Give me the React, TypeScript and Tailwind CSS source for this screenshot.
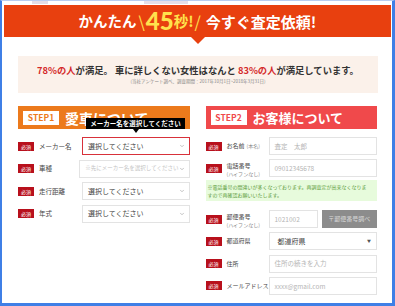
import { ChevronDown } from 'lucide-react';

const FONT = { fontFamily: '"Noto Sans CJK JP", "Noto Sans", sans-serif' };

function Badge() {
  return (
    <span className="flex h-[9px] w-[16px] shrink-0 items-center justify-center bg-[#b8101c] text-[5px] leading-none text-white">
      必須
    </span>
  );
}

function SelectBox({ text, muted, focused }: { text: string; muted?: boolean; focused?: boolean }) {
  return (
    <div
      className={`flex h-[18px] flex-1 items-center justify-between bg-white pl-[5px] pr-[4px] ${
        focused ? 'border-[1.5px] border-[#d8313a]' : 'border border-[#e3e3e3]'
      }`}
    >
      <span className={`whitespace-nowrap leading-none ${muted ? 'text-[5.5px] text-[#c4c4c4]' : 'text-[7px] text-[#444]'}`}>
        {text}
      </span>
      <ChevronDown className="h-[6px] w-[6px] text-[#888]" strokeWidth={2} />
    </div>
  );
}

function CarRow({ label, text, muted, focused }: { label: string; text: string; muted?: boolean; focused?: boolean }) {
  return (
    <div className="flex h-[18px] items-center">
      <Badge />
      <span className="ml-[5px] w-[43px] text-[6.5px] leading-none text-[#444]">{label}</span>
      <SelectBox text={text} muted={muted} focused={focused} />
    </div>
  );
}

function Input({ text, dark, className = '' }: { text: string; dark?: boolean; className?: string }) {
  return (
    <div className={`flex h-[18px] items-center border border-[#e3e3e3] bg-white pl-[5px] ${className}`}>
      <span className={`whitespace-nowrap text-[6.5px] leading-none ${dark ? 'text-[#555]' : 'text-[#b5b5b5]'}`}>{text}</span>
    </div>
  );
}

function UserRow({ label, sub, inline, children }: { label: string; sub?: string; inline?: string; children: React.ReactNode }) {
  return (
    <div className="flex h-[18px] items-center">
      <div className="flex h-[18px] w-[63px] shrink-0 items-center">
        <Badge />
        <div className={`ml-[5px] flex flex-col gap-[2px] ${sub ? 'mt-[3px]' : ''}`}>
          <span className="whitespace-nowrap text-[6px] leading-none text-[#444]">
            {label}
            {inline && <span className="ml-[2px] text-[5px] text-[#888]">{inline}</span>}
          </span>
          {sub && <span className="whitespace-nowrap text-[5px] leading-none text-[#888]">{sub}</span>}
        </div>
      </div>
      <div className="flex h-[18px] flex-1">{children}</div>
    </div>
  );
}

export default function App() {
  return (
    <div
      style={FONT}
      className="relative flex h-[306px] w-[395px] flex-col overflow-hidden border-b-[3px] border-l-[2px] border-r-[3px] border-t border-[#3f7fe6] border-t-[#b9cdf0] bg-white"
    >
      {/* cut-off image above */}
      <div className="flex h-[4px] shrink-0 gap-[96px] pl-[30px]">
        <div className="h-[3px] w-[16px] bg-[#e4dde6]" />
        <div className="h-[3px] w-[44px] bg-[#e6dfe8]" />
      </div>

      {/* banner */}
      <div className="relative ml-[2px] mr-[1px] flex h-[32px] shrink-0 items-center justify-center bg-[#e8400f] text-white">
        <div className="flex items-center font-bold leading-none">
          <span className="text-[14.5px]">かんたん</span>
          <span className="ml-[2px] text-[16px] font-normal text-[#ffe24d]">\</span>
          <span className="ml-[1px] text-[24px] text-[#ffe24d]" style={{ fontFamily: '"Lato", sans-serif', fontWeight: 900 }}>45</span>
          <span className="text-[14.5px] text-[#ffe24d]">秒!</span>
          <span className="ml-[1px] text-[16px] font-normal text-[#ffe24d]">/</span>
          <span className="ml-[5px] text-[15px]">今すぐ査定依頼!</span>
        </div>
        <div className="absolute left-[187px] top-[32px] h-0 w-0 border-l-[7px] border-r-[7px] border-t-[7px] border-l-transparent border-r-transparent border-t-[#e8400f]" />
      </div>

      {/* satisfaction box */}
      <div className="ml-[16px] mr-[14px] mt-[19px] flex h-[37px] shrink-0 flex-col items-center justify-center bg-[#fbf1ea]">
        <p className="whitespace-nowrap text-[9.3px] font-bold leading-none text-[#333]">
          <span className="text-[#d42a2a]">78%の人</span>が満足。 車に詳しくない女性はなんと{' '}
          <span className="text-[#d42a2a]">83%の人</span>が満足しています。
        </p>
        <p className="mt-[4px] whitespace-nowrap text-[4.5px] leading-none text-[#888]">
          (当社アンケート調べ、調査期間：2017年10月1日~2018年3月31日)
        </p>
      </div>

      {/* steps */}
      <div className="ml-[16px] mr-[15px] mt-[13px] grid grid-cols-2 gap-[16px]">
        {/* step 1 */}
        <div className="relative flex flex-col">
          <div className="flex h-[23px] items-center bg-[#ec7a1c] pl-[5px]">
            <span className="flex h-[14px] w-[36px] items-center justify-center bg-white text-[8.5px] font-bold leading-none text-[#ec7a1c]">
              STEP1
            </span>
            <span className="ml-[6px] text-[14px] font-bold leading-none text-white">愛車について</span>
          </div>
          <div className="mt-[8px] flex flex-col gap-[4.5px]">
            <CarRow label="メーカー名" text="選択してください" focused />
            <CarRow label="車種" text="※先にメーカー名を選択してください" muted />
            <CarRow label="走行距離" text="選択してください" />
            <CarRow label="年式" text="選択してください" />
          </div>

          {/* tooltip */}
          <div className="absolute left-[68px] top-[12px] flex h-[11px] w-[99px] items-center justify-center bg-black">
            <span className="whitespace-nowrap text-[6.5px] font-bold leading-none text-white">メーカー名を選択してください</span>
            <div className="absolute left-[47px] top-[11px] h-0 w-0 border-l-[3px] border-r-[3px] border-t-[4px] border-l-transparent border-r-transparent border-t-black" />
          </div>
        </div>

        {/* step 2 */}
        <div className="flex flex-col">
          <div className="flex h-[23px] items-center bg-[#f0494b] pl-[5px]">
            <span className="flex h-[15px] w-[36px] items-center justify-center bg-white text-[8.5px] font-bold leading-none text-[#f0494b]">
              STEP2
            </span>
            <span className="ml-[6px] text-[13px] font-bold leading-none text-white">お客様について</span>
          </div>

          <div className="mt-[8px] flex flex-col gap-[4px]">
            <UserRow label="お名前" inline="(本名)">
              <Input text="査定　太郎" className="flex-1" />
            </UserRow>
            <UserRow label="電話番号" sub="(ハイフンなし)">
              <Input text="09012345678" className="flex-1" />
            </UserRow>
          </div>

          <div className="mt-[3px] flex h-[21px] flex-col justify-center gap-[2.5px] bg-[#e7fbdc] px-[2px]">
            <span className="whitespace-nowrap text-[5px] leading-none text-[#5a9a3a]">
              ※電話番号の間違いが多くなっております。再調査定が出来なくなりま
            </span>
            <span className="whitespace-nowrap text-[5px] leading-none text-[#5a9a3a]">すので再確認お願いいたします。</span>
          </div>

          <div className="mt-[9px] flex flex-col gap-[4.3px]">
            <UserRow label="郵便番号" sub="(ハイフンなし)">
              <Input text="1021002" className="w-[49px]" />
              <div className="ml-[4px] flex h-[18px] flex-1 items-center justify-center bg-[#8c8c8c]">
                <span className="whitespace-nowrap text-[6px] leading-none text-[#d8d8d8]">〒郵便番号調べ</span>
              </div>
            </UserRow>
            <UserRow label="都道府県">
              <div className="flex h-[18px] flex-1 items-center justify-between border border-[#e3e3e3] bg-white pl-[8px] pr-[5px]">
                <span className="text-[7px] leading-none text-[#444]">都道府県</span>
                <span className="text-[4px] leading-none text-[#555]">▼</span>
              </div>
            </UserRow>
            <UserRow label="住所">
              <Input text="住所の続きを入力" className="flex-1" />
            </UserRow>
            <UserRow label="メールアドレス">
              <Input text="xxxx@gmail.com" className="flex-1" />
            </UserRow>
          </div>
        </div>
      </div>
    </div>
  );
}
